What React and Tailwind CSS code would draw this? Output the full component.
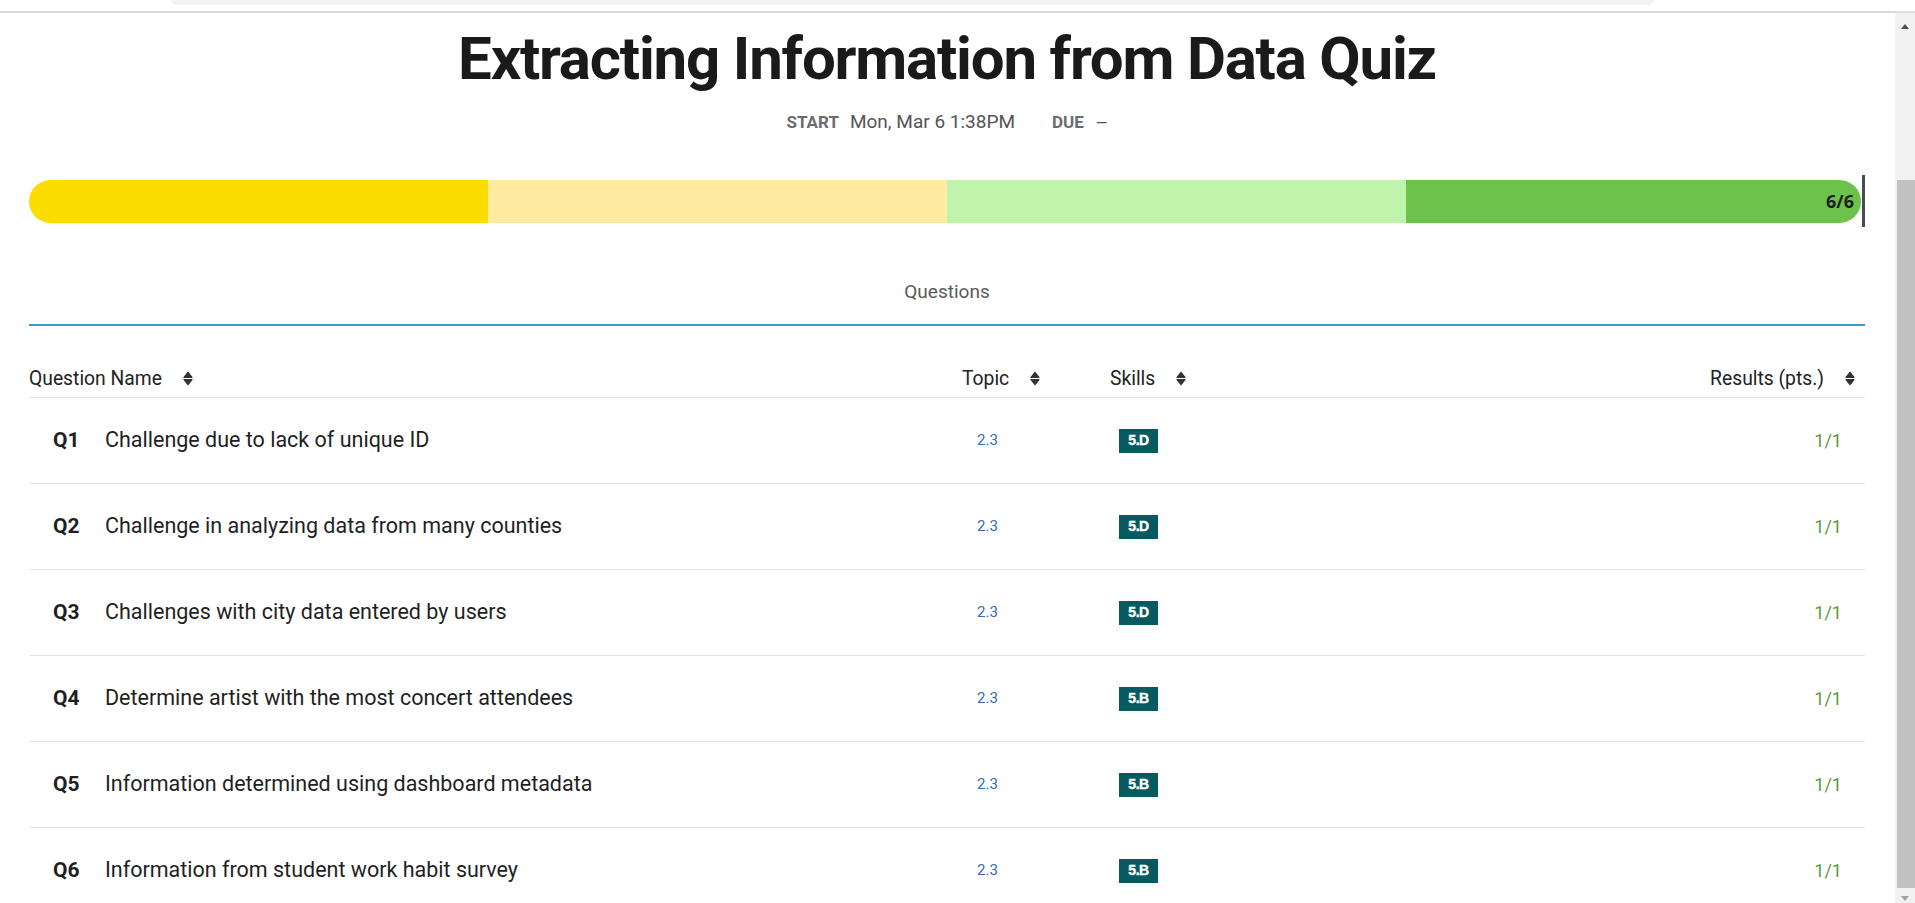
import React from 'react';

const questions = [
  { id: 'Q1', name: 'Challenge due to lack of unique ID', topic: '2.3', skill: '5.D', result: '1/1' },
  { id: 'Q2', name: 'Challenge in analyzing data from many counties', topic: '2.3', skill: '5.D', result: '1/1' },
  { id: 'Q3', name: 'Challenges with city data entered by users', topic: '2.3', skill: '5.D', result: '1/1' },
  { id: 'Q4', name: 'Determine artist with the most concert attendees', topic: '2.3', skill: '5.B', result: '1/1' },
  { id: 'Q5', name: 'Information determined using dashboard metadata', topic: '2.3', skill: '5.B', result: '1/1' },
  { id: 'Q6', name: 'Information from student work habit survey', topic: '2.3', skill: '5.B', result: '1/1' },
];

function SortIcon() {
  return (
    <svg width="10" height="15" viewBox="0 0 10 15" className="ml-[21px] shrink-0">
      <path d="M1 6.4 L5 1.3 L9 6.4 Z" fill="#333" stroke="#333" strokeWidth="1.2" strokeLinejoin="round" />
      <path d="M1 8.6 L5 13.7 L9 8.6 Z" fill="#333" stroke="#333" strokeWidth="1.2" strokeLinejoin="round" />
    </svg>
  );
}

export default function App() {
  return (
    <div className="w-[1915px] h-[903px] overflow-hidden bg-white flex flex-col font-['Roboto',sans-serif]">
      {/* browser chrome remnant */}
      <div className="h-[13px] shrink-0 border-b-2 border-[#dadce0]">
        <div className="ml-[171px] w-[1483px] h-[5px] bg-[#f1f3f4] rounded-b-[20px]" />
      </div>

      <div className="flex flex-1 min-h-0">
        <main className="flex-1 pl-[29px] pr-[30px] pt-[16px]">
          <h1 className="text-center text-[60px] leading-none font-bold tracking-[-1.2px] text-[#1a1a1a]">
            Extracting Information from Data Quiz
          </h1>

          <div className="mt-[23px] h-[20px] flex items-baseline justify-center">
            <span className="text-[17px] leading-none font-bold text-[#6b6b70]">START</span>
            <span className="ml-[11px] text-[19px] leading-none text-[#555]">Mon, Mar 6 1:38PM</span>
            <span className="ml-[37px] text-[17px] leading-none font-bold text-[#6b6b70]">DUE</span>
            <span className="ml-[12px] text-[15px] leading-none text-[#555]">—</span>
          </div>

          <div className="mt-[43px] h-[52px] flex items-center">
            <div className="flex-1 h-[43px] flex">
              <div className="w-[459px] bg-[#fddc00] rounded-l-full" />
              <div className="w-[459px] bg-[#feeb9f]" />
              <div className="w-[459px] bg-[#c0f4aa]" />
              <div className="flex-1 bg-[#6cc24a] rounded-r-full flex items-center justify-end pr-[7px]">
                <span className="font-['Open_Sans',sans-serif] font-bold text-[18px] leading-none text-[#1e1e1e]">6/6</span>
              </div>
            </div>
            <div className="ml-[1px] w-[3px] h-[52px] bg-[#4a4a55]" />
          </div>

          <div className="mt-[55px] pb-[23px] border-b-2 border-[#3b95d1] text-center text-[19px] leading-[19px] text-[#5a5a5a]">
            Questions
          </div>

          <div className="pt-[43px] pb-[9px] border-b border-[#e3e3e3] flex text-[19.3px] leading-[19px] text-[#222]">
            <div className="w-[933px] flex items-center">
              <span>Question Name</span>
              <SortIcon />
            </div>
            <div className="w-[148px] flex items-center">
              <span>Topic</span>
              <SortIcon />
            </div>
            <div className="flex-1 flex items-center">
              <span>Skills</span>
              <SortIcon />
            </div>
            <div className="flex items-center pr-[10px]">
              <span>Results (pts.)</span>
              <SortIcon />
            </div>
          </div>

          {questions.map((q) => (
            <div key={q.id} className="h-[86px] border-b border-[#e3e3e3] flex items-center">
              <div className="w-[933px] flex items-center">
                <span className="w-[76px] pl-[24px] text-[21px] font-bold text-[#1f1f1f]">{q.id}</span>
                <span className="text-[21.5px] text-[#1f1f1f]">{q.name}</span>
              </div>
              <div className="w-[148px] pl-[15px] text-[15px] text-[#2f6db5]">{q.topic}</div>
              <div className="flex-1 pl-[9px]">
                <span className="inline-flex items-center justify-center w-[39px] h-[24px] bg-[#075a60] text-white text-[14px] font-bold tracking-[-0.5px] [-webkit-text-stroke:0.4px_white] font-['Liberation_Sans',sans-serif]">
                  {q.skill}
                </span>
              </div>
              <div className="pr-[23px] text-[18px] text-[#5c9b3a]">{q.result}</div>
            </div>
          ))}
        </main>

        {/* scrollbar */}
        <div className="w-[20px] shrink-0 bg-[#f1f1f1] flex flex-col">
          <div className="h-[167px] flex justify-center pt-[11px]">
            <svg width="8" height="5" viewBox="0 0 8 5"><path d="M0 5 L4 0 L8 5 Z" fill="#505050" /></svg>
          </div>
          <div className="ml-[2px] w-[18px] h-[708px] bg-[#c1c1c1]" />
          <div className="flex justify-center pt-[8px]">
            <svg width="8" height="5" viewBox="0 0 8 5"><path d="M0 0 L4 5 L8 0 Z" fill="#a3a3a3" /></svg>
          </div>
        </div>
      </div>
    </div>
  );
}
